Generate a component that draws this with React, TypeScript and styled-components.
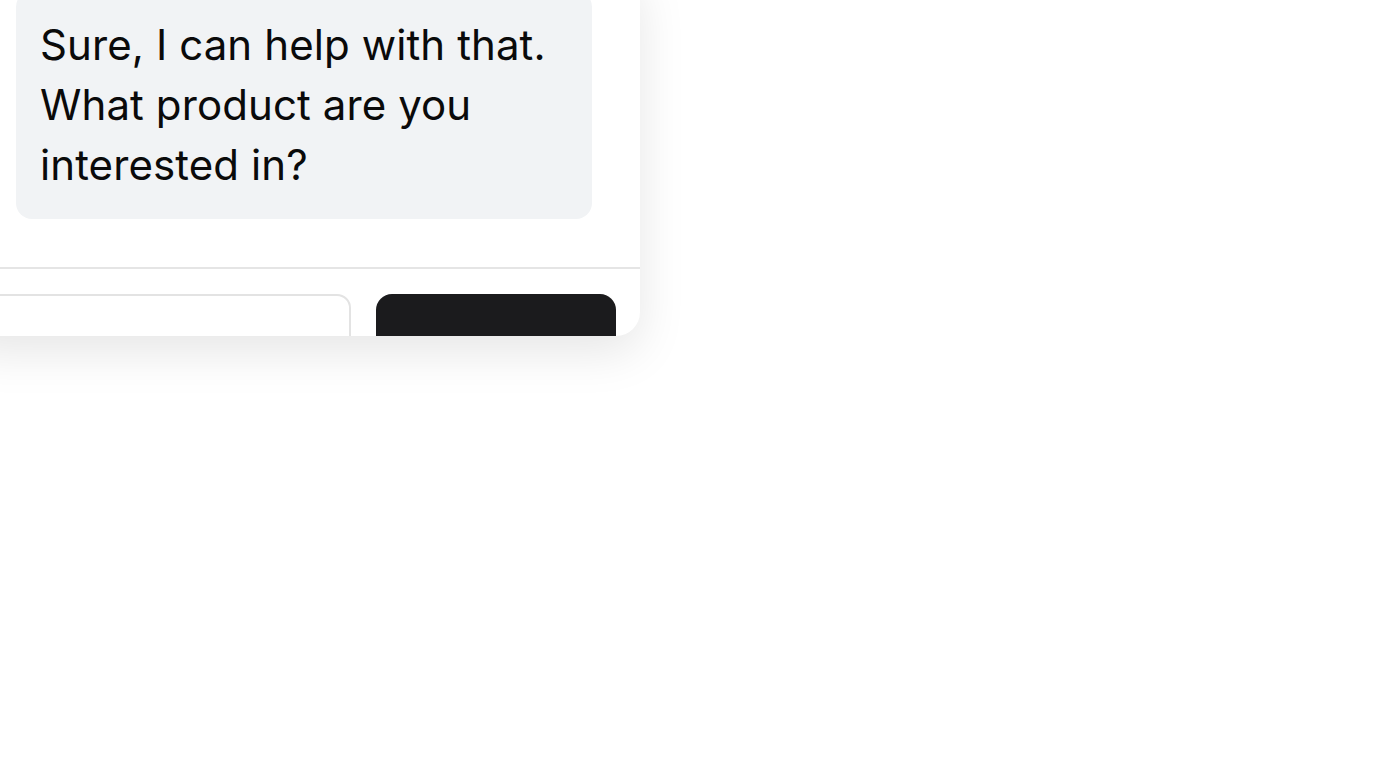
import React from "react";
import styled, { createGlobalStyle } from "styled-components";

const GlobalStyle = createGlobalStyle`
  html, body {
    margin: 0;
    padding: 0;
    background: #ffffff;
    overflow: hidden;
  }
  body {
    font-family: Inter, "Noto Sans", sans-serif;
  }
`;

const App: React.FC = () => {
  return (
    <Page>
      <GlobalStyle />
      <ChatPanel>
        <Messages>
          <Bubble>
            Sure, I can help with that.
            <br />
            What product are you
            <br />
            interested in?
          </Bubble>
        </Messages>
        <Composer>
          <MessageInput placeholder="" aria-label="Message" />
          <SendButton aria-label="Send" />
        </Composer>
      </ChatPanel>
    </Page>
  );
};

// Styled Components
const Page = styled.div`
  width: 1376px;
  height: 768px;
  overflow: hidden;
`;

const ChatPanel = styled.div`
  width: 680px;
  height: 369px;
  margin: -33px 0 0 -40px;
  background: #ffffff;
  border-radius: 24px;
  overflow: hidden;
  box-shadow: 0 16px 48px rgba(0, 0, 0, 0.1);
  display: flex;
  flex-direction: column;
`;

const Messages = styled.div`
  padding: 24px 48px 48px 56px;
  display: flex;
  flex-direction: column;
  align-items: flex-start;
`;

const Bubble = styled.div`
  width: 528px;
  padding: 24px;
  background: #f1f3f5;
  border-radius: 16px;
  color: #0a0a0a;
  font-size: 42px;
  line-height: 60px;
  letter-spacing: 0.1px;
  white-space: nowrap;
`;

const Composer = styled.div`
  display: flex;
  gap: 25px;
  padding: 25px 24px 24px 24px;
  border-top: 2px solid #e5e5e5;
`;

const MessageInput = styled.input`
  flex: 1;
  min-width: 0;
  height: 72px;
  box-sizing: border-box;
  border: 2px solid #e3e3e3;
  border-radius: 14px;
  outline: none;
  background: #ffffff;
  font-family: inherit;
  font-size: 32px;
`;

const SendButton = styled.button`
  flex: 0 0 240px;
  height: 72px;
  border: none;
  border-radius: 16px;
  background: #1b1b1d;
`;

export default App;
